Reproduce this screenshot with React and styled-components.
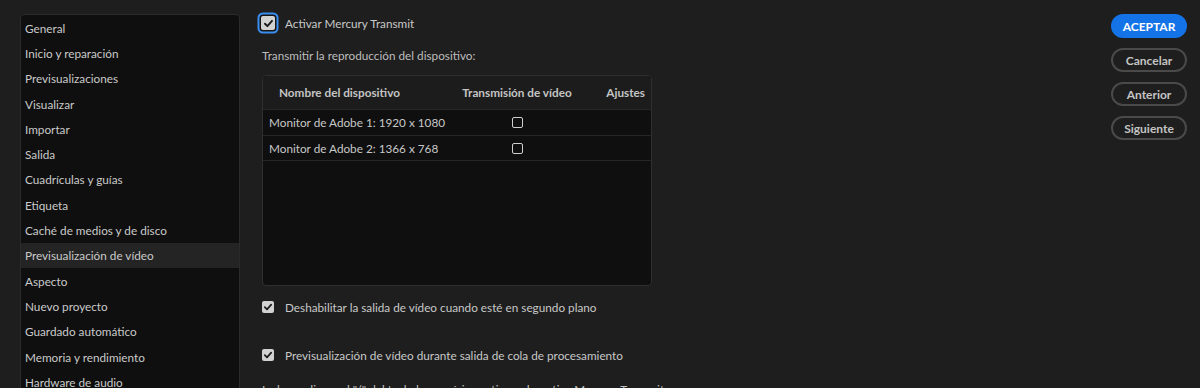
import React from "react";
import styled, { createGlobalStyle } from "styled-components";

const Global = createGlobalStyle`
  html, body { margin: 0; padding: 0; background: #1e1e1e; overflow: hidden; }
  body { font-family: Lato, "Open Sans", sans-serif; font-size: 11.75px; color: #c8c8c8; }
`;

const Page = styled.div`
  display: flex;
  align-items: flex-start;
  padding: 14px 13px 0 20px;
  height: 388px;
  box-sizing: border-box;
`;

const Sidebar = styled.div`
  width: 220px;
  height: 420px;
  flex: none;
  box-sizing: border-box;
  padding-top: 0.5px;
  background: #0f0f0f;
  border: 1px solid #2b2b2b;
  border-radius: 4px;
`;

const NavItem = styled.div`
  height: 25.3px;
  display: flex;
  align-items: center;
  padding-left: 4px;
  color: #cacaca;
  background: ${(p) => (p.$active ? "#242424" : "transparent")};
  white-space: nowrap;
`;

const Main = styled.div`
  flex: 1;
  margin-left: 22px;
  display: flex;
  flex-direction: column;
  align-items: flex-start;
`;

const CheckRow = styled.label`
  display: flex;
  align-items: center;
  height: ${(p) => p.$h || 16}px;
  margin-top: ${(p) => p.$mt || 0}px;
  gap: ${(p) => p.$gap || 11}px;
  color: #c8c8c8;
  white-space: nowrap;
`;

const Box = styled.span`
  display: inline-flex;
  align-items: center;
  justify-content: center;
  width: ${(p) => p.$size}px;
  height: ${(p) => p.$size}px;
  box-sizing: border-box;
  border-radius: 2px;
  background: #d2d2d2;
  margin-left: ${(p) => p.$ml || 0}px;
  box-shadow: ${(p) =>
    p.$focus ? "0 0 0 1.5px #151515, 0 0 0 3.5px #3a8ef0" : "none"};
`;

const Outline = styled.span`
  display: inline-block;
  width: 11px;
  height: 11px;
  box-sizing: border-box;
  border: 1.5px solid #cfcfcf;
  border-radius: 2px;
`;

const Text = styled.div`
  margin-top: ${(p) => p.$mt || 0}px;
  height: 16px;
  line-height: 16px;
  color: ${(p) => p.$color || "#bdbdbd"};
  white-space: nowrap;
`;

const Table = styled.div`
  margin-top: 11px;
  width: 390px;
  height: 211px;
  box-sizing: border-box;
  border: 1px solid #2f2f2f;
  border-radius: 4px;
  overflow: hidden;
  display: flex;
  flex-direction: column;
  background: #0f0f0f;
`;

const HeadRow = styled.div`
  display: grid;
  grid-template-columns: 184px 140px 1fr;
  height: 33px;
  align-items: center;
  background: #1c1c1c;
  font-weight: 700;
  color: #c4c4c4;
`;

const HeadCell = styled.div`
  text-align: ${(p) => p.$align || "left"};
  padding-left: ${(p) => p.$pl || 0}px;
  padding-right: ${(p) => p.$pr || 0}px;
  white-space: nowrap;
`;

const Row = styled.div`
  display: grid;
  grid-template-columns: 184px 140px 1fr;
  height: 26px;
  box-sizing: border-box;
  align-items: center;
  border-top: 1px solid #262626;
  color: #c8c8c8;
  &:last-child { border-bottom: 1px solid #262626; }
`;

const Cell = styled.div`
  display: flex;
  justify-content: ${(p) => (p.$center ? "center" : "flex-start")};
  padding-left: ${(p) => p.$pl || 0}px;
  white-space: nowrap;
`;

const Buttons = styled.div`
  display: flex;
  flex-direction: column;
  gap: 10px;
  flex: none;
`;

const Btn = styled.button`
  width: 76px;
  height: 24px;
  box-sizing: border-box;
  border-radius: 12px;
  font-family: Lato, "Open Sans", sans-serif;
  font-size: 12px;
  font-weight: 700;
  padding: 0;
  cursor: pointer;
  color: ${(p) => (p.$primary ? "#ffffff" : "#c4c4c4")};
  background: ${(p) => (p.$primary ? "#1473e6" : "transparent")};
  border: 2px solid ${(p) => (p.$primary ? "#1473e6" : "#4a4a4a")};
`;

const Check = ({ size = 10 }) => (
  <svg width={size} height={size} viewBox="0 0 10 10">
    <polyline
      points="1.8,5.2 4,7.4 8.2,2.6"
      fill="none"
      stroke="#1a1a1a"
      strokeWidth="1.7"
      strokeLinecap="round"
      strokeLinejoin="round"
    />
  </svg>
);

const nav = [
  "General",
  "Inicio y reparación",
  "Previsualizaciones",
  "Visualizar",
  "Importar",
  "Salida",
  "Cuadrículas y guías",
  "Etiqueta",
  "Caché de medios y de disco",
  "Previsualización de vídeo",
  "Aspecto",
  "Nuevo proyecto",
  "Guardado automático",
  "Memoria y rendimiento",
  "Hardware de audio",
];

const devices = [
  "Monitor de Adobe 1: 1920 x 1080",
  "Monitor de Adobe 2: 1366 x 768",
];

export default function App() {
  return (
    <>
      <Global />
      <Page>
        <Sidebar>
          {nav.map((n, i) => (
            <NavItem key={n} $active={i === 9}>
              {n}
            </NavItem>
          ))}
        </Sidebar>
        <Main>
          <CheckRow $h={18} $gap={10}>
            <Box $size={14} $focus $ml={-1}>
              <Check size={11} />
            </Box>
            Activar Mercury Transmit
          </CheckRow>
          <Text $mt={16}>Transmitir la reproducción del dispositivo:</Text>
          <Table>
            <HeadRow>
              <HeadCell $pl={16}>Nombre del dispositivo</HeadCell>
              <HeadCell $align="center">Transmisión de vídeo</HeadCell>
              <HeadCell $align="right" $pr={6}>Ajustes</HeadCell>
            </HeadRow>
            {devices.map((d) => (
              <Row key={d}>
                <Cell $pl={6}>{d}</Cell>
                <Cell $center>
                  <Outline />
                </Cell>
                <Cell />
              </Row>
            ))}
          </Table>
          <CheckRow $mt={13}>
            <Box $size={12}>
              <Check size={10} />
            </Box>
            Deshabilitar la salida de vídeo cuando esté en segundo plano
          </CheckRow>
          <CheckRow $mt={32}>
            <Box $size={12}>
              <Check size={10} />
            </Box>
            Previsualización de vídeo durante salida de cola de procesamiento
          </CheckRow>
          <Text $mt={19} $color="#c0c0c0">
            La barra diagonal "/" del teclado numérico activa o desactiva Mercury Transmit
          </Text>
        </Main>
        <Buttons>
          <Btn $primary>ACEPTAR</Btn>
          <Btn>Cancelar</Btn>
          <Btn>Anterior</Btn>
          <Btn>Siguiente</Btn>
        </Buttons>
      </Page>
    </>
  );
}
